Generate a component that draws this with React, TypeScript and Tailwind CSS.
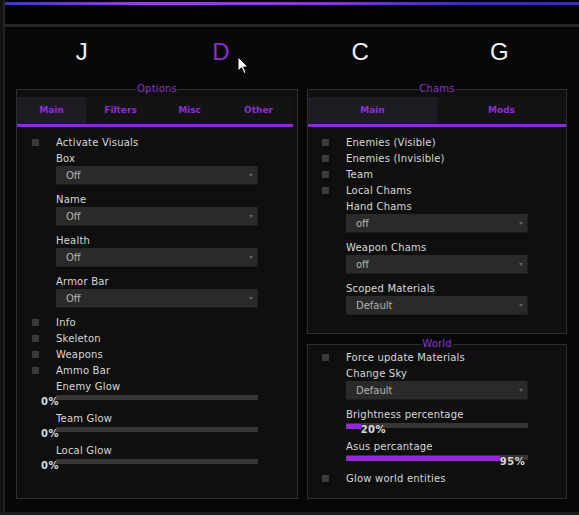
import React from "react";

const LABEL = "text-[10px] tracking-[0.2px] text-[#d8d8d8] whitespace-nowrap";

const Panel = ({
  title,
  className,
  children,
}: {
  title: string;
  className: string;
  children: React.ReactNode;
}) => (
  <div className={`relative border border-[#2f2f2f] bg-[#0f0f0f] ${className}`}>
    <span className="absolute left-1/2 -translate-x-1/2 -top-[7px] px-[1px] text-[10px] leading-[12px] tracking-[0.2px] text-[#8b36c8] bg-[linear-gradient(to_bottom,#070707_50%,#0f0f0f_50%)]">
      {title}
    </span>
    {children}
  </div>
);

const Tabs = ({ items, cols }: { items: string[]; cols: string }) => (
  <div className="mt-[7px]">
    <div className={`grid ${cols} h-[27px] bg-[#131313]`}>
      {items.map((t, i) => (
        <div
          key={t}
          className={`flex items-center justify-center text-[9px] font-bold text-[#8d2fd3] ${
            i === 0 ? "bg-[#1c1c22]" : ""
          }`}
        >
          {t}
        </div>
      ))}
    </div>
    <div className="h-[3px] bg-[#8f2ad6]" />
  </div>
);

const Check = ({ label }: { label: string }) => (
  <div className="flex items-center h-[16px] pl-[15px]">
    <span className="w-[7px] h-[7px] bg-[#3a3a3a] shrink-0" />
    <span className={`ml-[17px] ${LABEL}`}>{label}</span>
  </div>
);

const Label = ({ label }: { label: string }) => (
  <div className={`flex items-center h-[16px] pl-[39px] ${LABEL}`}>{label}</div>
);

const Combo = ({ value, w }: { value: string; w: string }) => (
  <div
    className={`ml-[39px] ${w} h-[19px] mb-[6px] bg-[#2a2a2a] border-r border-b border-[#1d1d1d] flex items-center justify-between pl-[10px] pr-[4px]`}
  >
    <span className="text-[10px] text-[#b3b3b3]">{value}</span>
    <svg width="4" height="3" viewBox="0 0 4 3">
      <path d="M0 0 H4 L2 3 Z" fill="#666" />
    </svg>
  </div>
);

const Slider = ({ pct, w }: { pct: number; w: string }) => (
  <div className={`relative ml-[39px] ${w} h-[15px]`}>
    <div className="mt-[1px] h-[5px] bg-[#363636]" />
    <div
      className="absolute left-0 top-[1px] flex items-start justify-end"
      style={{ width: `calc(${pct}% + ${3 + (pct / 100) * 3.5}px)` }}
    >
      <div className="flex-1 h-[5px] bg-[#9327dc]" />
      <span className="shrink-0 text-[10px] leading-[11px] font-bold tracking-[0.5px] text-[#d8d8d8]">
        {pct}%
      </span>
    </div>
  </div>
);

export default function App() {
  return (
    <div className="relative w-[579px] h-[515px] bg-[#070707] flex flex-col overflow-hidden font-['DejaVu_Sans',sans-serif]">
      <div className="flex flex-1 min-h-0">
        <div className="w-[3px] bg-[#131313]" />
        <div className="w-[2px] bg-[#232323]" />
        <div className="flex-1 flex flex-col">
          <div className="h-[2px] bg-[#030303]" />
          <div className="h-[3px] bg-[linear-gradient(to_right,#3b3bb6,#a33fd8_25%,#8a3acb_55%,#3c30a8_80%,#3a2f9e)]" />
          <div className="h-[19px] bg-[#030303]" />
          <div className="h-[3px] bg-[#262626]" />

          {/* top category letters */}
          <div className="grid grid-cols-4 ml-[7px] mr-[10px] pt-[11px] h-[62px] font-['Liberation_Sans',sans-serif] text-[24px] leading-[28px]">
            <div className="text-center text-[#f2f2f2]">J</div>
            <div className="text-center text-[#8a2fc9]">D</div>
            <div className="text-center text-[#f2f2f2]">C</div>
            <div className="text-center text-[#f2f2f2]">G</div>
          </div>

          <div className="flex gap-[9px] pl-[11px] pr-[12px]">
            <Panel title="Options" className="w-[282px] h-[410px]">
              <div className="pr-[4px]">
                <Tabs items={["Main", "Filters", "Misc", "Other"]} cols="grid-cols-4" />
              </div>
              <div className="mt-[7px]">
                <Check label="Activate Visuals" />
                <Label label="Box" />
                <Combo value="Off" w="w-[202px]" />
                <Label label="Name" />
                <Combo value="Off" w="w-[202px]" />
                <Label label="Health" />
                <Combo value="Off" w="w-[202px]" />
                <Label label="Armor Bar" />
                <Combo value="Off" w="w-[202px]" />
                <Check label="Info" />
                <Check label="Skeleton" />
                <Check label="Weapons" />
                <Check label="Ammo Bar" />
                <Label label="Enemy Glow" />
                <Slider pct={0} w="w-[202px]" />
                <Label label="Team Glow" />
                <Slider pct={0} w="w-[202px]" />
                <Label label="Local Glow" />
                <Slider pct={0} w="w-[202px]" />
              </div>
            </Panel>

            <div className="w-[260px] flex flex-col gap-[10px]">
              <Panel title="Chams" className="h-[245px]">
                <Tabs items={["Main", "Mods"]} cols="grid-cols-2" />
                <div className="mt-[7px] -ml-[1px]">
                  <Check label="Enemies (Visible)" />
                  <Check label="Enemies (Invisible)" />
                  <Check label="Team" />
                  <Check label="Local Chams" />
                  <Label label="Hand Chams" />
                  <Combo value="off" w="w-[182px]" />
                  <Label label="Weapon Chams" />
                  <Combo value="off" w="w-[182px]" />
                  <Label label="Scoped Materials" />
                  <Combo value="Default" w="w-[182px]" />
                </div>
              </Panel>

              <Panel title="World" className="h-[155px]">
                <div className="pt-[4px] -ml-[1px]">
                  <Check label="Force update Materials" />
                  <Label label="Change Sky" />
                  <Combo value="Default" w="w-[182px]" />
                  <Label label="Brightness percentage" />
                  <Slider pct={20} w="w-[182px]" />
                  <Label label="Asus percantage" />
                  <Slider pct={95} w="w-[182px]" />
                  <Check label="Glow world entities" />
                </div>
              </Panel>
            </div>
          </div>
        </div>
      </div>
      <div className="h-[3px] bg-[#1a1a1a]" />

      {/* mouse pointer */}
      <svg
        className="absolute left-[237px] top-[56px]"
        width="12"
        height="19"
        viewBox="0 0 12 19"
      >
        <path
          d="M1 1 L1 15 L4.5 11.8 L7 17.5 L9 16.6 L6.6 11 L11 11 Z"
          fill="#ffffff"
          stroke="#000000"
          strokeWidth="1"
          strokeLinejoin="round"
        />
      </svg>
    </div>
  );
}
